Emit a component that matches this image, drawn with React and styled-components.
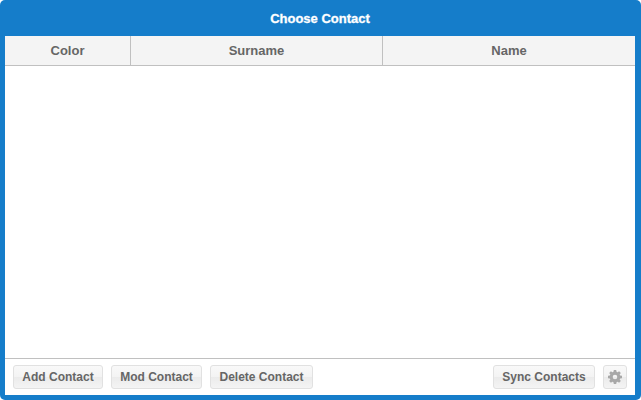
import React from "react";
import styled, { createGlobalStyle } from "styled-components";

const GlobalStyle = createGlobalStyle`
  * { box-sizing: border-box; }
  body { margin: 0; background: #fff; font-family: "Liberation Sans", Arial, sans-serif; }
`;

const Window = styled.div`
  display: flex;
  flex-direction: column;
  width: 641px;
  height: 400px;
  padding: 0 6px 5px 5px;
  border-radius: 5px;
  background: #157dca;
`;

const TitleBar = styled.h1`
  flex: none;
  height: 36px;
  margin: 0;
  color: #fff;
  font-size: 13px;
  font-weight: bold;
  line-height: 37px;
  text-align: center;
  -webkit-text-stroke: 0.3px #fff;
`;

const HeaderRow = styled.div`
  display: grid;
  grid-template-columns: 126px 252px 1fr;
  flex: none;
  height: 30px;
  border-bottom: 1px solid #c0c0c0;
  background: #f4f4f4;
`;

const HeaderCell = styled.div`
  border-right: 1px solid #c0c0c0;
  color: #666;
  font-size: 13px;
  font-weight: bold;
  line-height: 29px;
  text-align: center;

  &:last-child { border-right: 0; }
`;

const Body = styled.div`
  flex: 1;
  background: #fff;
`;

const Toolbar = styled.div`
  display: flex;
  flex: none;
  gap: 8px;
  height: 37px;
  padding: 6px 8px;
  border-top: 1px solid #c0c0c0;
  background: #fff;
`;

const Spacer = styled.div`
  flex: 1;
`;

const Button = styled.button`
  display: flex;
  align-items: center;
  justify-content: center;
  width: ${(p) => p.$width}px;
  height: 24px;
  padding: 0;
  border: 1px solid #e1e1e1;
  border-radius: 3px;
  background: linear-gradient(#f9f9f9, #f3f3f3 50%, #ebebeb 50%, #f4f4f4);
  color: #666;
  font: bold 12px/22px "Liberation Sans", Arial, sans-serif;
  white-space: nowrap;
`;

const teeth = [0, 45, 90, 135, 180, 225, 270, 315];

const Gear = () => (
  <svg width="14" height="14" viewBox="0 0 14 14" fill="#a8a8a8">
    <path
      fillRule="evenodd"
      d="M7 1.6a5.4 5.4 0 1 0 0 10.8A5.4 5.4 0 0 0 7 1.6zm0 3.1a2.3 2.3 0 1 1 0 4.6 2.3 2.3 0 0 1 0-4.6z"
    />
    {teeth.map((angle) => (
      <path key={angle} d="M5.4 2.2L5.8 0h2.4l.4 2.2z" transform={`rotate(${angle} 7 7)`} />
    ))}
  </svg>
);

export default function App() {
  return (
    <>
      <GlobalStyle />
      <Window>
        <TitleBar>Choose Contact</TitleBar>
        <HeaderRow>
          <HeaderCell>Color</HeaderCell>
          <HeaderCell>Surname</HeaderCell>
          <HeaderCell>Name</HeaderCell>
        </HeaderRow>
        <Body />
        <Toolbar>
          <Button $width={90}>Add Contact</Button>
          <Button $width={91}>Mod Contact</Button>
          <Button $width={103}>Delete Contact</Button>
          <Spacer />
          <Button $width={102}>Sync Contacts</Button>
          <Button $width={24} aria-label="Settings">
            <Gear />
          </Button>
        </Toolbar>
      </Window>
    </>
  );
}
